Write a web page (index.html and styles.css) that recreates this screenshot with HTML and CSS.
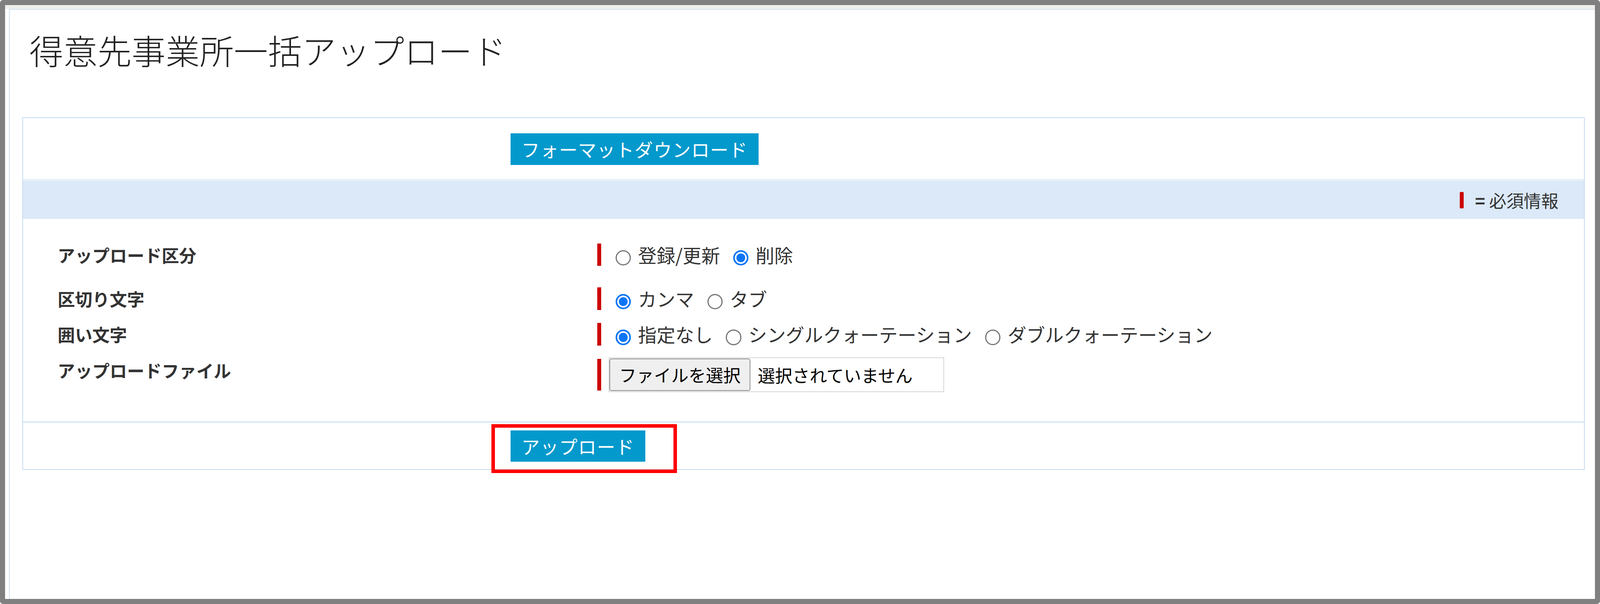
FILE: index.html
```html
<!DOCTYPE html>
<html lang="ja">
<head>
  <meta charset="UTF-8">
  <title>得意先事業所一括アップロード</title>
  <meta name="viewport" content="width=device-width, initial-scale=1.0">
  <link rel="stylesheet" href="styles.css">
</head>
<body>

  <div class="window">
    <div class="topbar"></div>

    <div class="page">
      <h1 class="title">得意先事業所一括アップロード</h1>

      <div class="panel">
        <div class="panel-row">
          <button class="btn" type="button">フォーマットダウンロード</button>
        </div>

        <div class="legend">
          <span class="req-mark"></span>
          <span class="legend-text"><b>=</b> 必須情報</span>
        </div>

        <div class="fields">
          <div class="field field-first">
            <div class="field-label">アップロード区分</div>
            <div class="field-value">
              <label class="opt"><input type="radio" name="kubun">登録/更新</label>
              <label class="opt"><input type="radio" name="kubun" checked>削除</label>
            </div>
          </div>

          <div class="field">
            <div class="field-label">区切り文字</div>
            <div class="field-value">
              <label class="opt"><input type="radio" name="delim" checked>カンマ</label>
              <label class="opt"><input type="radio" name="delim">タブ</label>
            </div>
          </div>

          <div class="field">
            <div class="field-label">囲い文字</div>
            <div class="field-value">
              <label class="opt"><input type="radio" name="quote" checked>指定なし</label>
              <label class="opt"><input type="radio" name="quote">シングルクォーテーション</label>
              <label class="opt"><input type="radio" name="quote">ダブルクォーテーション</label>
            </div>
          </div>

          <div class="field">
            <div class="field-label">アップロードファイル</div>
            <div class="field-value">
              <label class="file">
                <input type="file" class="file-input">
                <span class="file-btn">ファイルを選択</span>
                <span class="file-name">選択されていません</span>
              </label>
            </div>
          </div>
        </div>

        <div class="panel-row panel-foot">
          <span class="highlight">
            <button class="btn" type="button">アップロード</button>
          </span>
        </div>
      </div>
    </div>
  </div>

</body>
</html>
```

FILE: styles.css
```css
/* the capture is a scaled screen, so the page is laid out at 1x and zoomed */
html {
  zoom: 2.612;
  height: 100%;
}

body {
  margin: 0;
  height: 100%;
  background: #ffffff;
  color: #333333;
  font-family: "Noto Sans CJK JP", "Noto Sans", sans-serif;
}

.window {
  height: 100%;
  box-sizing: border-box;
  border: 5px solid #808080;
  border-radius: 3px;
  display: flex;
  flex-direction: column;
  overflow: hidden;
}

.topbar {
  flex: none;
  height: 4px;
  background: #f0efeb;
}

.page {
  flex: 1;
  margin-left: 4px;
  border-left: 1px solid #cfe1f4;
  border-top: 1px solid #cfe1f4;
  background: #ffffff;
}

.title {
  margin: 19px 0 0 19px;
  font-size: 33.4px;
  line-height: 40px;
  font-weight: 300;
  color: #222222;
}

.panel {
  margin: 46px 10px 0 12px;
  border: 1px solid #c7dcf1;
}

.panel-row {
  display: flex;
  padding: 15px 0 14px 478px;
}

.panel-foot {
  border-top: 2px solid #e0ecf8;
  padding: 7px 0 7px 478px;
}

.btn {
  display: block;
  height: 31px;
  padding: 0 10.5px;
  border: none;
  background: #0399cc;
  color: #ffffff;
  font-family: inherit;
  font-size: 18px;
  line-height: 31px;
  letter-spacing: 0.5px;
  cursor: pointer;
}

.highlight {
  position: relative;
  display: block;
}

.highlight::after {
  content: "";
  position: absolute;
  left: -19px;
  top: -6px;
  right: -31px;
  bottom: -11px;
  border: 3.5px solid #ff0000;
}

.legend {
  height: 37px;
  border-top: 2px solid #e6f0fa;
  background: #dbe9f8;
  display: flex;
  align-items: center;
  justify-content: flex-end;
  padding-right: 25px;
  font-size: 17px;
}

.req-mark {
  width: 4px;
  height: 16px;
  background: #cc0000;
  border-radius: 1px;
  margin-right: 11px;
}

.fields {
  padding: 24px 0 30px;
}

.field {
  display: flex;
  align-items: flex-start;
}

.field + .field {
  margin-top: 13px;
}

/* sibling margins collapse, so this one wins over the 13px above */
.field-first {
  margin-bottom: 21px;
}

.field-label {
  flex: none;
  width: 529px;
  padding-left: 34px;
  font-size: 17px;
  font-weight: bold;
  line-height: 22px;
  color: #333333;
}

.field-value {
  display: flex;
  align-items: center;
  min-height: 22px;
  border-left: 4px solid #cc0000;
  padding-left: 7px;
  font-size: 18.3px;
  line-height: 22px;
}

.opt {
  display: inline-flex;
  align-items: center;
  margin-right: 6px;
  white-space: nowrap;
}

.opt input {
  appearance: none;
  flex: none;
  width: 15px;
  height: 15px;
  box-sizing: border-box;
  margin: 6px 7px 0 7px;
  border: 1.3px solid #767676;
  border-radius: 50%;
  background: #ffffff;
}

.opt input:checked {
  border: 1.8px solid #0a75f5;
  background: #0a75f5;
  box-shadow: inset 0 0 0 1.6px #ffffff;
}

.file {
  display: flex;
  align-items: center;
  width: 329px;
  height: 34px;
  box-sizing: border-box;
  margin: -1.5px 0;
  border: 1px solid #d6d6d6;
  font-size: 17px;
  color: #000000;
}

.file-input {
  display: none;
}

.file-btn {
  height: 32px;
  box-sizing: border-box;
  padding: 0 9px;
  border: 1px solid #8f8f8f;
  border-radius: 2px;
  background: #efefef;
  line-height: 30px;
}

.file-name {
  margin-left: 7px;
}
```
